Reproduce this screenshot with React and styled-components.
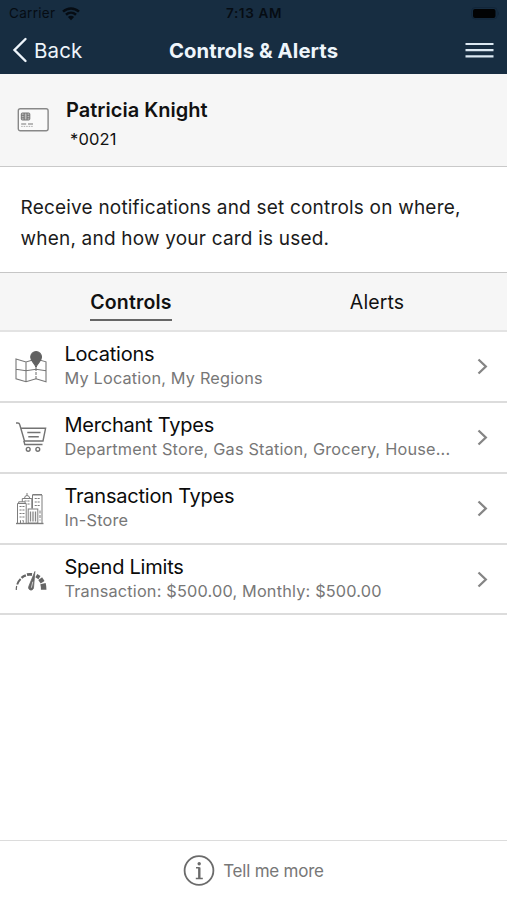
import React from "react";
import styled, { createGlobalStyle } from "styled-components";

const Global = createGlobalStyle`
  * { box-sizing: border-box; }
  body { margin: 0; background: #fff; font-family: Inter, "Liberation Sans", sans-serif; color: #111; }
  button { font: inherit; color: inherit; background: none; border: 0; padding: 0; }
  svg { display: block; flex: none; }
`;

const Screen = styled.div`
  width: 100%;
  height: 900px;
  display: flex;
  flex-direction: column;
  overflow: hidden;
`;

const Header = styled.header`
  height: 74px;
  flex: none;
  background: #172d41;
`;

const StatusBar = styled.div`
  height: 27px;
  display: grid;
  grid-template-columns: 1fr auto 1fr;
  align-items: center;
  padding: 0 8px 0 9px;
  color: #060c13;
  font-size: 13.5px;
  line-height: 27px;
`;

const Carrier = styled.span`
  display: flex;
  align-items: center;
  gap: 7px;
  letter-spacing: 0.3px;
`;

const Clock = styled.span`
  font-weight: 600;
  letter-spacing: 0.65px;
`;

const Battery = styled.span`
  justify-self: end;
`;

const NavBar = styled.nav`
  height: 46px;
  display: grid;
  grid-template-columns: 1fr auto 1fr;
  align-items: center;
  padding: 0 12px 0 12px;
  color: #eef5fb;
`;

const BackButton = styled.button`
  display: flex;
  align-items: center;
  gap: 6px;
  font-size: 20.5px;
  letter-spacing: 0.15px;
`;

const NavTitle = styled.h1`
  margin: 0;
  font-size: 20.3px;
  font-weight: 650;
  letter-spacing: 0.08px;
`;

const MenuButton = styled.button`
  justify-self: end;
  margin-right: 1px;
`;

const CardSummary = styled.section`
  height: 93px;
  flex: none;
  display: flex;
  background: #f6f6f6;
  border-bottom: 1px solid #c9c9c9;
  padding: 22px 17px 0;
  gap: 17px;
`;

const CardIconBox = styled.div`
  padding-top: 11px;
`;

const Owner = styled.div`
  font-size: 20px;
  line-height: 28px;
  font-weight: 600;
  letter-spacing: 0.02px;
`;

const CardNumber = styled.div`
  padding-left: 4px;
  margin-top: 2px;
  font-size: 16.5px;
  line-height: 26px;
  letter-spacing: 0.15px;
`;

const Intro = styled.p`
  height: 106px;
  flex: none;
  margin: 0;
  padding: 26px 20px 0 20.5px;
  border-bottom: 1px solid #c6c6c6;
  font-size: 19px;
  line-height: 30.5px;
  letter-spacing: 0.2px;
  color: #1b1b1b;
  white-space: nowrap;
`;

const Tabs = styled.div`
  height: 59px;
  flex: none;
  display: grid;
  grid-template-columns: 262px 1fr;
  justify-items: center;
  align-items: start;
  background: #f6f6f6;
  border-bottom: 2px solid #e3e3e3;
  padding-top: 14px;
`;

const Tab = styled.button`
  height: 34px;
  padding-bottom: 2px;
  font-size: 19.5px;
  line-height: 30px;
  font-weight: ${(p) => (p.$active ? 600 : 400)};
  letter-spacing: ${(p) => (p.$active ? "0.17px" : "0.1px")};
  border-bottom: 2px solid ${(p) => (p.$active ? "#666" : "transparent")};
  margin-right: ${(p) => (p.$active ? "0" : "15px")};
`;

const Row = styled.div`
  height: ${(p) => p.$height}px;
  flex: none;
  display: grid;
  grid-template-columns: 32px minmax(0, 1fr) 12px;
  column-gap: 18px;
  padding: 0 18px 0 15px;
  border-bottom: 2px solid #dcdcdc;
`;

const RowIcon = styled.div`
  padding-top: 18px;
`;

const RowText = styled.div`
  padding-top: 9px;
  margin-left: -0.5px;
`;

const RowTitle = styled.div`
  font-size: 20px;
  line-height: 26px;
  letter-spacing: -0.23px;
  color: #0b0b0b;
`;

const RowDetail = styled.div`
  font-size: 16.3px;
  line-height: 23px;
  letter-spacing: 0.18px;
  color: #777;
  white-space: nowrap;
`;

const RowChevron = styled.div`
  padding-top: 26px;
`;

const Footer = styled.footer`
  margin-top: auto;
  height: 60px;
  flex: none;
  display: flex;
  justify-content: center;
  align-items: center;
  gap: 8px;
  border-top: 1px solid #dcdcdc;
  color: #777;
  font-size: 17px;
  letter-spacing: -0.22px;
`;

const WifiIcon = () => (
  <svg width="18" height="14" viewBox="0 0 18 14" fill="none" stroke="currentColor" strokeWidth="2.5">
    <path d="M1 4.7C5.7 .3 12.3 .3 17 4.7" />
    <path d="M4 7.8c3-2.7 7-2.7 10 0" />
    <path d="M9 13.2 5.9 9.9c1.8-1.5 4.4-1.5 6.2 0z" fill="currentColor" stroke="none" />
  </svg>
);

const BatteryIcon = () => (
  <svg width="28" height="14" viewBox="0 0 28 14">
    <rect x=".7" y=".5" width="25.5" height="11.5" rx="3.5" fill="none" stroke="#12263a" />
    <path d="M27 4.5v4q1-.6 1-2t-1-2" fill="#12263a" />
    <rect x="2" y="2" width="22.5" height="9" rx="2" fill="#020304" />
  </svg>
);

const BackIcon = () => (
  <svg width="16" height="26" viewBox="0 0 16 26" fill="none" stroke="currentColor" strokeWidth="2.4" strokeLinecap="round">
    <path d="M13.5 2 2.5 13l11 11" />
  </svg>
);

const MenuIcon = () => (
  <svg width="29" height="18" viewBox="0 0 29 18" stroke="#dce8f2" strokeWidth="2.2">
    <path d="M.5 3h28M.5 9.2h28M.5 15.4h28" />
  </svg>
);

const CreditCardIcon = () => (
  <svg width="32" height="25" viewBox="0 0 32 25" fill="none" stroke="#777">
    <rect x="1.3" y="1.8" width="29.8" height="22" rx="2" fill="#fafafa" stroke="#888" strokeWidth="1.4" />
    <rect x="4.3" y="6" width="8.5" height="7" rx="1" fill="#bbb" />
    <path d="M4.5 8.3h2.7M4.5 10.8h2.7M10 8.3h2.6M10 10.8h2.6M7.2 6.1v6.8M10 6.1v6.8" stroke="#666" strokeWidth=".8" />
    <path d="M4.2 17h12" strokeDasharray="5 1.8" />
    <path d="M4.2 19.4h12" stroke="#999" strokeDasharray="1.5 1" strokeWidth=".8" />
  </svg>
);

const MapIcon = () => (
  <svg width="32" height="34" viewBox="0 0 32 34" fill="none" stroke="#777" strokeWidth="1.1">
    <path d="m1 9 10 3 10-3 10 2.8v20l-10-3-10 3-10-3zM11 12v19.8M1 19.3l10 1.5 10-1.5 10 1.5" />
    <path d="M21 18v11" strokeDasharray="3 1" />
    <path d="M21 17.5c-1-4-5.3-6-5.3-10.5a5.4 5.4 0 0 1 10.8 0c0 4.5-4.5 6.5-5.5 10.5z" fill="#626262" stroke="#626262" />
  </svg>
);

const CartIcon = () => (
  <svg width="32" height="34" viewBox="0 0 32 34" fill="none" stroke="#737373" strokeWidth="1.4">
    <path d="M1 2h1.8q1.5 0 1.9 1.5L9.5 20H28l2.6-12.8H5.8" />
    <path d="m8.8 19.8 1 3.7h17.7" />
    <path d="M12.3 11.5h13.2M13.3 15.7h10.5" />
    <circle cx="13.2" cy="28.3" r="1.9" />
    <circle cx="22.8" cy="28.3" r="1.9" />
  </svg>
);

const BuildingsIcon = () => (
  <svg width="32" height="34" viewBox="0 0 32 34" fill="none" stroke="#7d7d7d" strokeWidth="1">
    <path d="M1 31.5h27.5" strokeWidth="1.4" />
    <path d="M2.5 31V11.5h8.7V31M3.7 11.5V9.8h6.4v1.7" />
    <path d="M7.3 9.8V6.5h9.5v10M9.5 6.5Q9.5 3.5 12 3.5t2.8 3M12 3.5V1" />
    <path d="M17.5 16.5V3h9.5v28M17.5 2.5H27" />
    <rect x="13.2" y="17" width="9.6" height="14" fill="#fff" />
    <path d="M15.5 19.5v10M18 19.5v10M20.5 19.5v10" stroke="#888" strokeWidth="1.3" />
    <path d="M4.5 14.5h5M4.5 18h5M4.5 21.5h5M4.5 25h5M19.7 6.5h5.6M19.7 10h5.6M19.7 13.5h5.6M9.5 9h5.5M12.5 12h3" strokeDasharray="2.1 .8" />
    <path d="M5.5 31v-2.5h2.8V31M25 18.5v10" strokeDasharray="3 1.5" />
  </svg>
);

const GaugeIcon = () => (
  <svg width="32" height="34" viewBox="0 0 32 34" fill="none" stroke="#656565">
    <path d="M1.3 27q-.1-2 .4-4" strokeWidth="1.2" />
    <path d="M2.2 21.5q1.1-3.3 3.4-5.5" strokeWidth="1.9" />
    <path d="M6.5 14.8q2-1.8 4.4-2.5" strokeWidth="2.4" />
    <path d="M12 11.7q2.5-.6 5-.2" strokeWidth="2.8" />
    <path d="m21.3 12.6 3.2 2" strokeWidth="3.8" />
    <path d="m25.2 15.6 2.4 3.6" strokeWidth="4.6" />
    <path d="M28 20.6q.7 2.7.7 6.2" strokeWidth="5.5" />
    <path d="M19.9 8.5 18.5 24.8a2.5 2.5 0 1 1-4.7-1.4z" fill="#656565" strokeWidth=".8" />
    <path d="m16.4 24.7 1.4-6" stroke="#ddd" strokeWidth=".9" />
  </svg>
);

const ChevronIcon = () => (
  <svg width="12" height="17" viewBox="0 0 12 17" fill="none" stroke="#858585" strokeWidth="2.3">
    <path d="m1.5 1.5 7.3 7-7.3 7" />
  </svg>
);

const InfoIcon = () => (
  <svg width="32" height="32" viewBox="0 0 32 32" fill="none" stroke="#6b6b6b" strokeWidth="1.8">
    <circle cx="16" cy="15.5" r="14.4" />
    <circle cx="16.2" cy="8.8" r="1.7" fill="#6b6b6b" stroke="none" />
    <path d="M13 12.8h3.7M12.8 23.6h7" strokeWidth="1.5" />
    <path d="M16.3 12.5v11" strokeWidth="2.4" />
  </svg>
);

const controls = [
  { title: "Locations", detail: "My Location, My Regions", Icon: MapIcon, height: 71 },
  { title: "Merchant Types", detail: "Department Store, Gas Station, Grocery, House...", Icon: CartIcon, height: 71 },
  { title: "Transaction Types", detail: "In-Store", Icon: BuildingsIcon, height: 71 },
  { title: "Spend Limits", detail: "Transaction: $500.00, Monthly: $500.00", Icon: GaugeIcon, height: 70 },
];

export default function App() {
  return (
    <>
      <Global />
      <Screen>
        <Header>
          <StatusBar>
            <Carrier>Carrier <WifiIcon /></Carrier>
            <Clock>7:13 AM</Clock>
            <Battery><BatteryIcon /></Battery>
          </StatusBar>
          <NavBar>
            <BackButton><BackIcon />Back</BackButton>
            <NavTitle>Controls &amp; Alerts</NavTitle>
            <MenuButton aria-label="Menu"><MenuIcon /></MenuButton>
          </NavBar>
        </Header>
        <CardSummary>
          <CardIconBox><CreditCardIcon /></CardIconBox>
          <div>
            <Owner>Patricia Knight</Owner>
            <CardNumber>*0021</CardNumber>
          </div>
        </CardSummary>
        <Intro>
          Receive notifications and set controls on where,<br />
          when, and how your card is used.
        </Intro>
        <Tabs>
          <Tab $active>Controls</Tab>
          <Tab>Alerts</Tab>
        </Tabs>
        {controls.map(({ title, detail, Icon, height }) => (
          <Row key={title} $height={height}>
            <RowIcon><Icon /></RowIcon>
            <RowText>
              <RowTitle>{title}</RowTitle>
              <RowDetail>{detail}</RowDetail>
            </RowText>
            <RowChevron><ChevronIcon /></RowChevron>
          </Row>
        ))}
        <Footer><InfoIcon />Tell me more</Footer>
      </Screen>
    </>
  );
}
